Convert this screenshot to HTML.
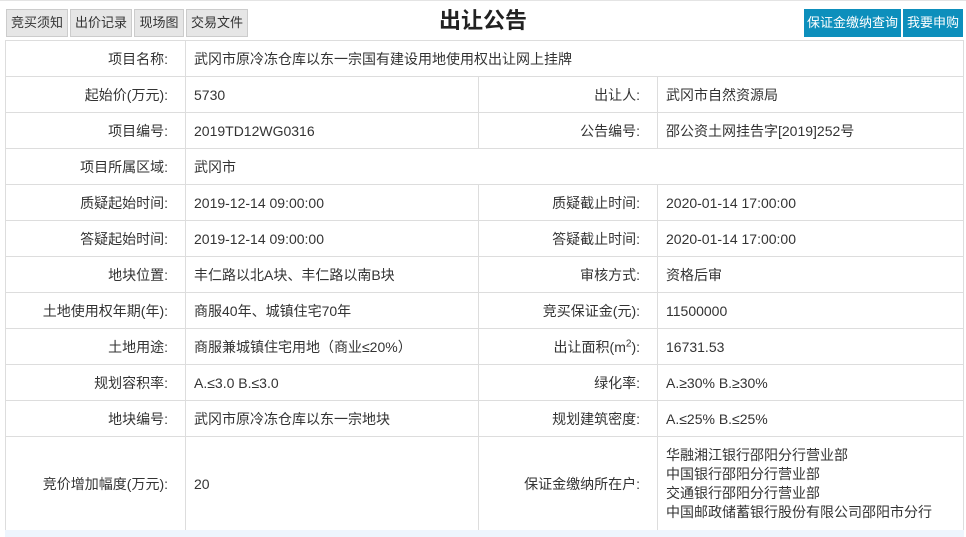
<!DOCTYPE html>
<html><head><meta charset="utf-8"><style>
*{margin:0;padding:0;box-sizing:border-box}
body{width:966px;height:537px;overflow:hidden;background:#fff;font-family:"Liberation Sans","Noto Sans CJK SC",sans-serif;font-size:14px;color:#333;position:relative}
.topline{position:absolute;left:0;top:0;width:966px;height:1px;background:#e4e4e4}
.btn{position:absolute;top:9px;height:28px;line-height:26px;background:#e6e6e6;border:1px solid #ccc;font-size:13px;text-align:center;color:#333}
.bb{position:absolute;top:9px;height:28px;line-height:28px;background:#0d8fbc;color:#fff;font-size:13px;text-align:center}
h1{position:absolute;left:0;width:966px;text-align:center;top:6px;font-size:22px;font-weight:bold;color:#222;line-height:30px}
table{position:absolute;left:5px;top:40px;border-collapse:collapse;width:959px}
td{border:1px solid #ddd;height:36px;padding:0 8px;vertical-align:middle}
td.l{text-align:right;padding-right:17px}
.c1{width:180px}.c2{width:293px}.c3{width:179px}
.foot{position:absolute;left:5px;top:530px;width:959px;height:7px;background:#eef5fd}
</style></head><body>
<div class="topline"></div>
<div class="btn" style="left:6px;width:62px">竞买须知</div>
<div class="btn" style="left:70px;width:62px">出价记录</div>
<div class="btn" style="left:134px;width:50px">现场图</div>
<div class="btn" style="left:186px;width:62px">交易文件</div>
<h1>出让公告</h1>
<div class="bb" style="left:804px;width:97px">保证金缴纳查询</div>
<div class="bb" style="left:903px;width:60px">我要申购</div>
<table>
<tr><td class="l c1">项目名称:</td><td colspan="3">武冈市原冷冻仓库以东一宗国有建设用地使用权出让网上挂牌</td></tr>
<tr><td class="l c1">起始价(万元):</td><td class="c2">5730</td><td class="l c3">出让人:</td><td>武冈市自然资源局</td></tr>
<tr><td class="l">项目编号:</td><td>2019TD12WG0316</td><td class="l">公告编号:</td><td>邵公资土网挂告字[2019]252号</td></tr>
<tr><td class="l">项目所属区域:</td><td colspan="3">武冈市</td></tr>
<tr><td class="l">质疑起始时间:</td><td>2019-12-14 09:00:00</td><td class="l">质疑截止时间:</td><td>2020-01-14 17:00:00</td></tr>
<tr><td class="l">答疑起始时间:</td><td>2019-12-14 09:00:00</td><td class="l">答疑截止时间:</td><td>2020-01-14 17:00:00</td></tr>
<tr><td class="l">地块位置:</td><td>丰仁路以北A块、丰仁路以南B块</td><td class="l">审核方式:</td><td>资格后审</td></tr>
<tr><td class="l">土地使用权年期(年):</td><td>商服40年、城镇住宅70年</td><td class="l">竞买保证金(元):</td><td>11500000</td></tr>
<tr><td class="l">土地用途:</td><td>商服兼城镇住宅用地（商业≤20%）</td><td class="l">出让面积(m<sup style="font-size:10px">2</sup>):</td><td>16731.53</td></tr>
<tr><td class="l">规划容积率:</td><td>A.≤3.0 B.≤3.0</td><td class="l">绿化率:</td><td>A.≥30% B.≥30%</td></tr>
<tr><td class="l">地块编号:</td><td>武冈市原冷冻仓库以东一宗地块</td><td class="l">规划建筑密度:</td><td>A.≤25% B.≤25%</td></tr>
<tr><td class="l" style="height:94px">竞价增加幅度(万元):</td><td>20</td><td class="l">保证金缴纳所在户:</td><td style="line-height:19px">华融湘江银行邵阳分行营业部<br>中国银行邵阳分行营业部<br>交通银行邵阳分行营业部<br>中国邮政储蓄银行股份有限公司邵阳市分行</td></tr>
</table>
<div class="foot"></div>
</body></html>
